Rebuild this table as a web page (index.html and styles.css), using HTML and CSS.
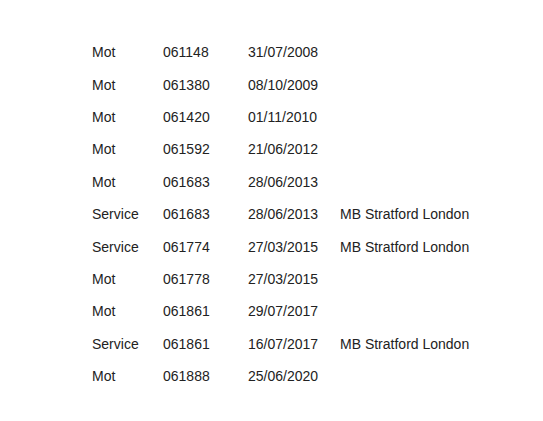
FILE: index.html
```html
<!DOCTYPE html>
<html>
<head>
<meta charset="utf-8">
<link rel="stylesheet" href="styles.css">
</head>
<body>
<div class="list">
  <div class="row"><span>Mot</span><span>061148</span><span>31/07/2008</span><span></span></div>
  <div class="row"><span>Mot</span><span>061380</span><span>08/10/2009</span><span></span></div>
  <div class="row"><span>Mot</span><span>061420</span><span>01/11/2010</span><span></span></div>
  <div class="row"><span>Mot</span><span>061592</span><span>21/06/2012</span><span></span></div>
  <div class="row"><span>Mot</span><span>061683</span><span>28/06/2013</span><span></span></div>
  <div class="row"><span>Service</span><span>061683</span><span>28/06/2013</span><span>MB Stratford London</span></div>
  <div class="row"><span>Service</span><span>061774</span><span>27/03/2015</span><span>MB Stratford London</span></div>
  <div class="row"><span>Mot</span><span>061778</span><span>27/03/2015</span><span></span></div>
  <div class="row"><span>Mot</span><span>061861</span><span>29/07/2017</span><span></span></div>
  <div class="row"><span>Service</span><span>061861</span><span>16/07/2017</span><span>MB Stratford London</span></div>
  <div class="row"><span>Mot</span><span>061888</span><span>25/06/2020</span><span></span></div>
</div>
</body>
</html>
```
FILE: styles.css
```css
html, body {
  margin: 0;
  padding: 0;
  background: #ffffff;
}
body {
  font-family: "Liberation Sans", Arial, sans-serif;
  font-size: 14px;
  color: #222222;
}
.list {
  padding: 36px 0 0 92px;
}
.row {
  display: grid;
  grid-template-columns: 71px 85px 92px auto;
  height: 32.4px;
  align-items: center;
  white-space: nowrap;
}
```
